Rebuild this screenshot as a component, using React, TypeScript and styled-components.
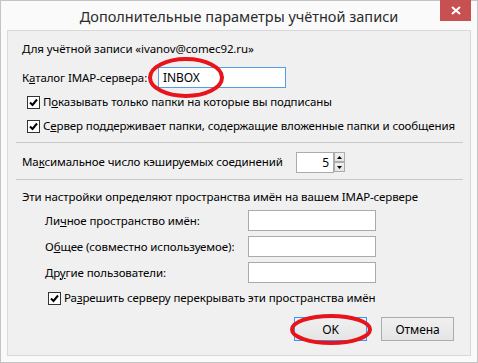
import React from "react";
import styled, { createGlobalStyle } from "styled-components";

const GlobalStyle = createGlobalStyle`
  html, body {
    margin: 0;
    padding: 0;
    background: #fafafa;
  }
  body {
    font-family: "Noto Sans", "Open Sans", sans-serif;
    font-size: 11.5px;
    letter-spacing: -0.1px;
    color: #000;
  }
`;

const Window = styled.div`
  width: 478px;
  height: 363px;
  box-sizing: border-box;
  background: #fafafa;
  border: 1px solid #c4c4c4;
  display: flex;
  flex-direction: column;
`;

const TitleBar = styled.div`
  height: 29px;
  position: relative;
  display: flex;
  align-items: center;
  justify-content: center;
`;

const Title = styled.div`
  font-size: 14.5px;
  letter-spacing: 0;
  color: #2b2b2b;
  margin-top: 1px;
`;

const CloseButton = styled.div`
  position: absolute;
  top: -1px;
  right: 6px;
  width: 31px;
  height: 21px;
  background: #c75050;
  display: flex;
  align-items: center;
  justify-content: center;
`;

const Client = styled.div`
  flex: 1;
  margin: 0 6px 6px 6px;
  border: 1px solid #d9d9d9;
  background: #f0f0f0;
  padding: 10px 7px 0 14px;
  display: flex;
  flex-direction: column;
`;

const Row = styled.div<{ $top: number; $h: number; $indent?: number }>`
  display: flex;
  align-items: center;
  height: ${(p) => p.$h}px;
  margin-top: ${(p) => p.$top}px;
  padding-left: ${(p) => p.$indent ?? 0}px;
  white-space: nowrap;
`;

const Label = styled.div<{ $w?: number }>`
  width: ${(p) => (p.$w ? `${p.$w}px` : "auto")};
  flex-shrink: 0;
  line-height: 16px;
`;

const Separator = styled.div<{ $top: number }>`
  height: 1px;
  background: #c8c8c8;
  margin-top: ${(p) => p.$top}px;
  margin-left: -6px;
`;

const Input = styled.div<{ $w: number; $focus?: boolean; $right?: boolean }>`
  width: ${(p) => p.$w}px;
  height: 21px;
  box-sizing: border-box;
  background: #fff;
  border: 1px solid ${(p) => (p.$focus ? "#569de5" : "#ababab")};
  display: flex;
  align-items: center;
  justify-content: ${(p) => (p.$right ? "flex-end" : "flex-start")};
  padding: 0 4px;
  font-size: 12px;
`;

const Spin = styled.div`
  display: flex;
  flex-direction: column;
  width: 11px;
  height: 20px;
`;

const SpinButton = styled.div`
  flex: 1;
  box-sizing: border-box;
  border: 1px solid #acacac;
  background: linear-gradient(#f0f0f0, #e5e5e5);
  display: flex;
  align-items: center;
  justify-content: center;
`;

const Box = styled.div`
  width: 13px;
  height: 13px;
  box-sizing: border-box;
  border: 1px solid #333;
  background: #fff;
  margin-right: 3px;
  display: flex;
  align-items: center;
  justify-content: center;
  flex-shrink: 0;
`;

const Buttons = styled.div`
  display: flex;
  justify-content: flex-end;
  gap: 14px;
  margin-top: 11px;
  padding-right: 9px;
`;

const Button = styled.div<{ $default?: boolean }>`
  width: 73px;
  height: 24px;
  box-sizing: border-box;
  border: 1px solid ${(p) => (p.$default ? "#3399ff" : "#acacac")};
  background: linear-gradient(#f0f0f0, #e5e5e5);
  display: flex;
  align-items: center;
  justify-content: center;
  position: relative;
  font-size: 12px;
`;

const Marked = styled.div`
  position: relative;
`;

const Ellipse = styled.svg`
  position: absolute;
  pointer-events: none;
  overflow: visible;
`;

const Check = () => (
  <Box>
    <svg width="11" height="11" viewBox="0 0 11 11">
      <path d="M2 5.5 L4.5 8 L9 2.5" fill="none" stroke="#000" strokeWidth="2" />
    </svg>
  </Box>
);

const CheckRow = ({ top, indent, children }: { top: number; indent?: number; children: React.ReactNode }) => (
  <Row $top={top} $h={16} $indent={indent}>
    <Check />
    <Label>{children}</Label>
  </Row>
);

const RedMark = ({ left, top, w, h }: { left: number; top: number; w: number; h: number }) => (
  <Ellipse style={{ left, top }} width={w} height={h}>
    <ellipse cx={w / 2} cy={h / 2} rx={w / 2 - 2} ry={h / 2 - 2} fill="none" stroke="#e8141c" strokeWidth="4" />
  </Ellipse>
);

export default function App() {
  return (
    <>
      <GlobalStyle />
      <Window>
        <TitleBar>
          <Title>Дополнительные параметры учётной записи</Title>
          <CloseButton>
            <svg width="10" height="9" viewBox="0 0 10 9">
              <path d="M1 1 L9 8 M9 1 L1 8" stroke="#fff" strokeWidth="2" />
            </svg>
          </CloseButton>
        </TitleBar>
        <Client>
          <Row $top={0} $h={16}>
            <Label>Для учётной записи «ivanov@comec92.ru»</Label>
          </Row>
          <Row $top={10} $h={21}>
            <Label $w={136}>
              К<u>а</u>талог IMAP-сервера:
            </Label>
            <Marked>
              <Input $w={128} $focus>
                INBOX
              </Input>
              <RedMark left={-10} top={-10} w={76} h={41} />
            </Marked>
          </Row>
          <CheckRow top={6} indent={5}>
            П<u>о</u>казывать только папки на которые вы подписаны
          </CheckRow>
          <CheckRow top={8} indent={5}>
            С<u>е</u>рвер поддерживает папки, содержащие вложенные папки и сообщения
          </CheckRow>
          <Separator $top={8} />
          <Row $top={9} $h={20}>
            <Label $w={274}>
              Ма<u>к</u>симальное число кэшируемых соединений
            </Label>
            <Input $w={38} $right>
              5
            </Input>
            <Spin>
              <SpinButton>
                <svg width="5" height="3" viewBox="0 0 5 3">
                  <path d="M0 3 L2.5 0 L5 3 Z" fill="#000" />
                </svg>
              </SpinButton>
              <SpinButton>
                <svg width="5" height="3" viewBox="0 0 5 3">
                  <path d="M0 0 L2.5 3 L5 0 Z" fill="#000" />
                </svg>
              </SpinButton>
            </Spin>
          </Row>
          <Separator $top={7} />
          <Row $top={9} $h={16}>
            <Label>Эти настройки определяют пространства имён на вашем IMAP-сервере</Label>
          </Row>
          <Row $top={5} $h={21} $indent={23}>
            <Label $w={203}>
              Ли<u>ч</u>ное пространство имён:
            </Label>
            <Input $w={128} />
          </Row>
          <Row $top={5} $h={21} $indent={23}>
            <Label $w={203}>
              О<u>б</u>щее (совместно используемое):
            </Label>
            <Input $w={128} />
          </Row>
          <Row $top={5} $h={21} $indent={23}>
            <Label $w={203}>
              Др<u>у</u>гие пользователи:
            </Label>
            <Input $w={128} />
          </Row>
          <CheckRow top={7} indent={26}>
            Ра<u>з</u>решить серверу перекрывать эти пространства имён
          </CheckRow>
          <Buttons>
            <Button $default>
              OK
              <RedMark left={-5} top={-4} w={82} h={31} />
            </Button>
            <Button>Отмена</Button>
          </Buttons>
        </Client>
      </Window>
    </>
  );
}
